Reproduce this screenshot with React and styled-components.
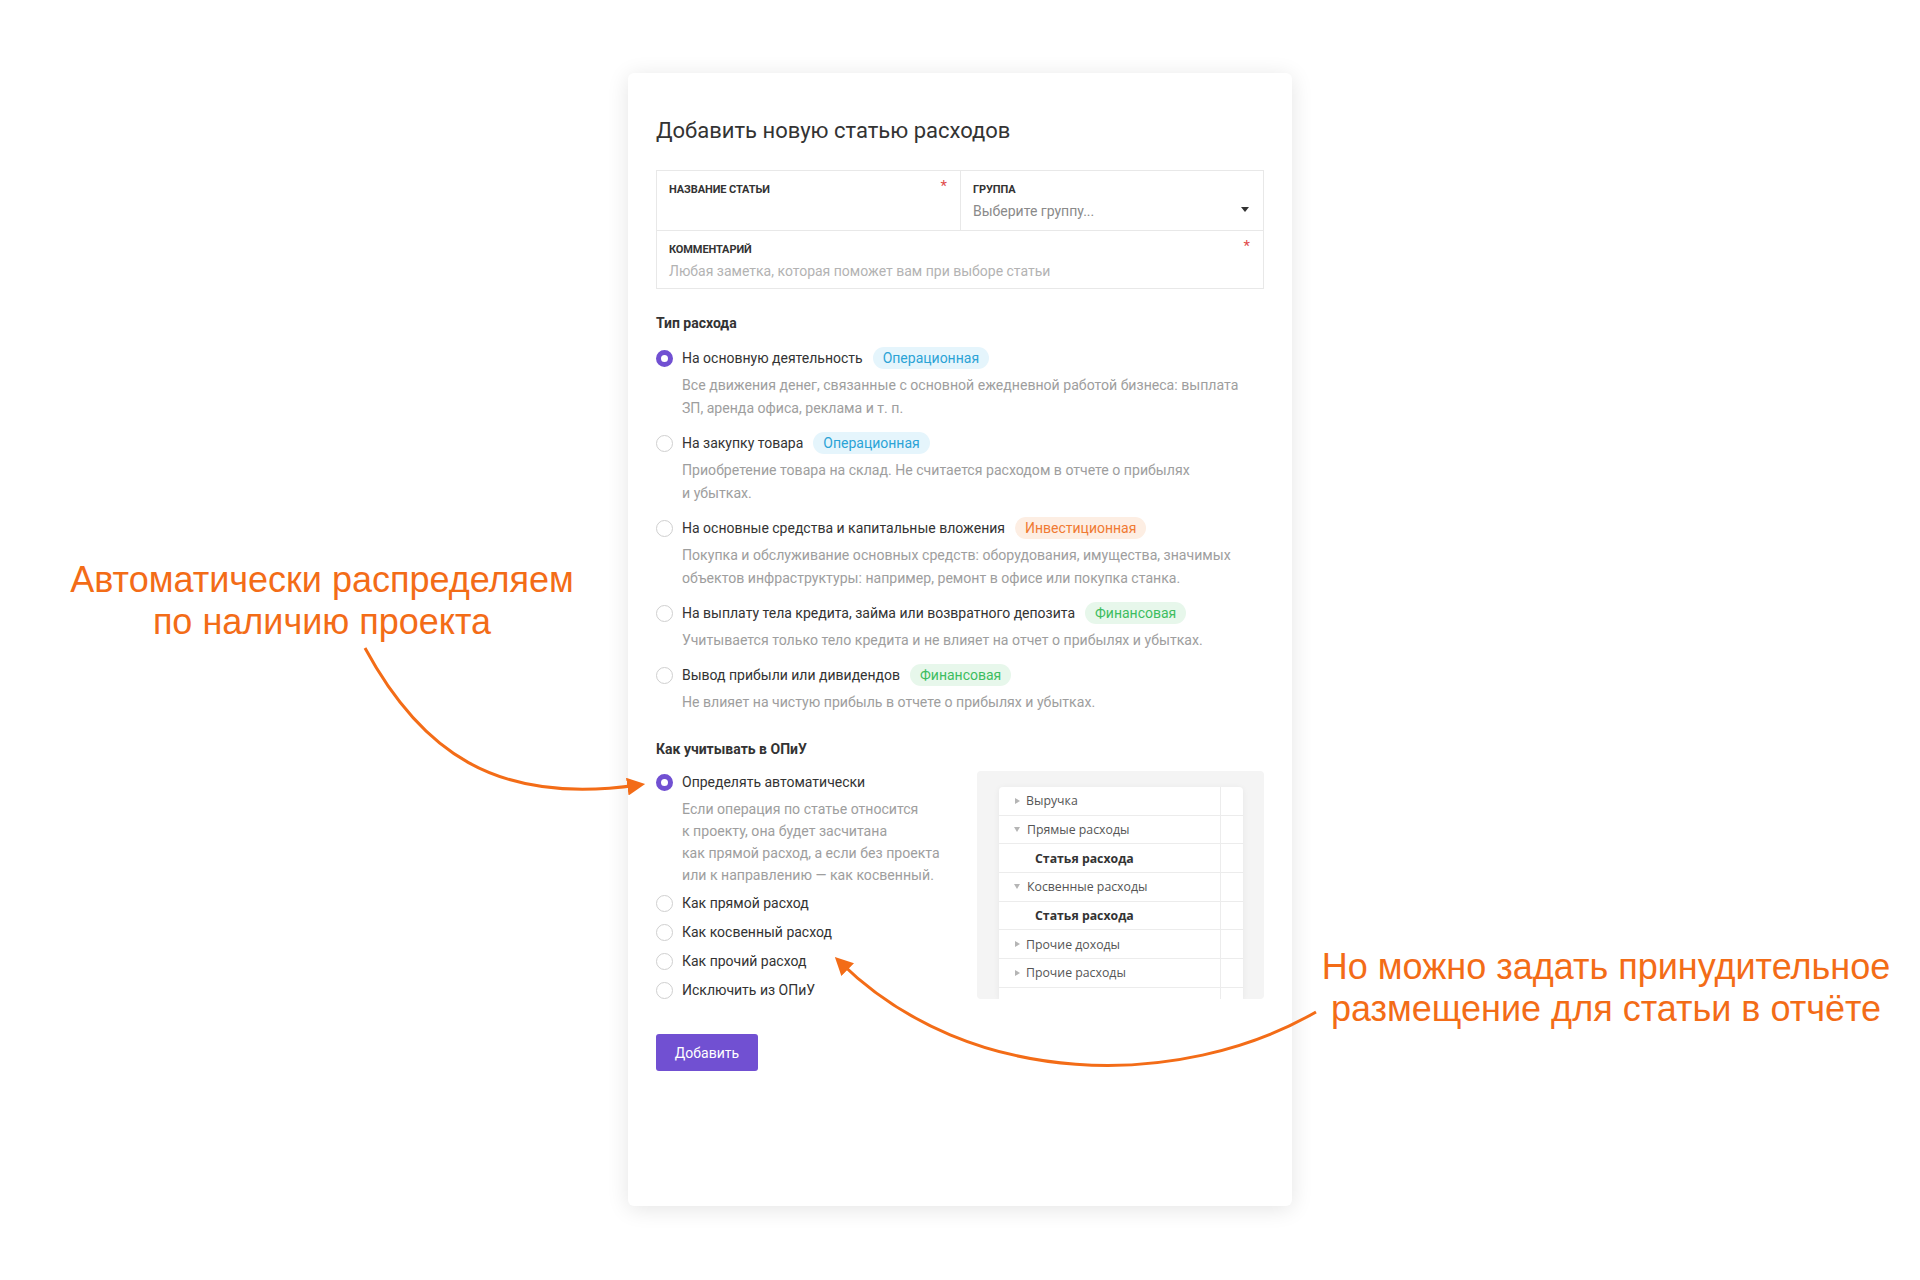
import React from "react";
import styled, { createGlobalStyle } from "styled-components";

const GlobalStyle = createGlobalStyle`
  body {
    margin: 0;
    background: #ffffff;
    font-family: Roboto, "Noto Sans", sans-serif;
    color: #333333;
  }
`;

const Page = styled.div`
  position: relative;
  width: 1920px;
  height: 1280px;
  display: grid;
  grid-template-columns: 628px 664px 1fr;
  overflow: hidden;
`;

const Note = styled.div`
  padding-top: ${p => p.top}px;
  padding-left: ${p => p.shift || 0}px;
  text-align: center;
  font-family: "Liberation Sans", Arial, sans-serif;
  font-size: 36px;
  line-height: 42px;
  color: #f36c17;
`;

const Card = styled.div`
  margin-top: 73px;
  height: 1133px;
  box-sizing: border-box;
  padding: 42px 28px 40px;
  background: #ffffff;
  border-radius: 6px;
  box-shadow: 0 3px 22px rgba(0, 0, 0, 0.11);
`;

const Title = styled.h1`
  margin: 0 0 23px;
  font-size: 22px;
  line-height: 32px;
  font-weight: 400;
  color: #333333;
`;

const Fields = styled.div`
  display: grid;
  grid-template-columns: 1fr 1fr;
  border: 1px solid #e8e8e8;
`;

const Field = styled.div`
  position: relative;
  grid-column: ${p => (p.wide ? "1 / 3" : "auto")};
  height: ${p => (p.wide ? 58 : 59)}px;
  box-sizing: border-box;
  padding: 12px 12px 0;
  border-left: ${p => (p.divider ? "1px solid #e8e8e8" : "none")};
  border-top: ${p => (p.wide ? "1px solid #e8e8e8" : "none")};
`;

const FieldLabel = styled.div`
  font-size: 11px;
  line-height: 14px;
  font-weight: 700;
  letter-spacing: -0.1px;
  text-transform: uppercase;
  color: #333333;
`;

const FieldValue = styled.div`
  margin-top: 4px;
  font-size: 14px;
  line-height: 20px;
  color: ${p => (p.light ? "#b3b3b3" : "#8a8a8a")};
`;

const Star = styled.span`
  position: absolute;
  top: 6px;
  right: 13px;
  font-size: 15px;
  color: #e14c4c;
`;

const Caret = styled.span`
  position: absolute;
  right: 14px;
  top: 36px;
  width: 0;
  height: 0;
  border-left: 4.5px solid transparent;
  border-right: 4.5px solid transparent;
  border-top: 5px solid #333333;
`;

const Heading = styled.h2`
  margin: ${p => p.top}px 0 ${p => p.bottom}px;
  font-size: 14px;
  line-height: 20px;
  font-weight: 700;
  color: #333333;
`;

const OptionList = styled.div`
  display: flex;
  flex-direction: column;
  gap: ${p => p.gap}px;
`;

const Option = styled.div`
  display: flex;
  flex-direction: column;
  margin-bottom: ${p => p.pull || 0}px;
`;

const OptionRow = styled.div`
  display: flex;
  align-items: center;
  height: 22px;
  font-size: 14px;
  color: #333333;
`;

const Radio = styled.span`
  width: 17px;
  height: 17px;
  box-sizing: border-box;
  border-radius: 50%;
  margin-right: 9px;
  flex-shrink: 0;
  background: #ffffff;
  border: ${p => (p.checked ? "5px solid #7150d2" : "1px solid #cfcfcf")};
`;

const Badge = styled.span`
  margin-left: 10px;
  height: 22px;
  padding: 0 10px;
  border-radius: 11px;
  font-size: 14px;
  line-height: 22px;
  color: ${p => p.fg};
  background: ${p => p.bg};
`;

const Desc = styled.div`
  margin-top: 5px;
  padding-left: 26px;
  font-size: 14.1px;
  line-height: ${p => p.lh || 23}px;
  color: #9e9e9e;
`;

const Split = styled.div`
  display: grid;
  grid-template-columns: 321px 287px;
`;

const Preview = styled.div`
  height: 228px;
  box-sizing: border-box;
  padding: 16px 21px 0 22px;
  background: #f4f4f4;
  border-radius: 4px;
  overflow: hidden;
`;

const Table = styled.div`
  background: #ffffff;
  border-radius: 4px 4px 0 0;
  box-shadow: 0 1px 6px rgba(0, 0, 0, 0.06);
  height: 100%;
`;

const TreeRow = styled.div`
  display: grid;
  grid-template-columns: 1fr 22px;
  height: 28.67px;
  box-sizing: border-box;
  border-bottom: 1px solid #ececec;
`;

const TreeCell = styled.div`
  display: flex;
  align-items: center;
  padding-left: ${p => (p.bold ? 36 : 15)}px;
  font-family: "Open Sans", sans-serif;
  font-size: 12.3px;
  font-weight: ${p => (p.bold ? 700 : 400)};
  color: ${p => (p.bold ? "#333333" : "#555555")};
  border-right: 1px solid #ececec;
`;

const Tri = styled.span`
  width: 0;
  height: 0;
  margin-right: 7px;
  ${p =>
    p.down
      ? `border-left: 3.5px solid transparent;
         border-right: 3.5px solid transparent;
         border-top: 5px solid #b5b5b5;`
      : `border-top: 3.5px solid transparent;
         border-bottom: 3.5px solid transparent;
         border-left: 5px solid #b5b5b5;
         margin-left: 1px;
         margin-right: 6px;`}
`;

const Button = styled.button`
  margin-top: 33px;
  width: 102px;
  height: 37px;
  border: none;
  border-radius: 3px;
  background: #7150d2;
  color: #ffffff;
  font-family: Roboto, sans-serif;
  font-size: 14px;
`;

const Overlay = styled.svg`
  position: absolute;
  left: 0;
  top: 0;
  pointer-events: none;
`;

const types = [
  {
    label: "На основную деятельность",
    badge: "Операционная",
    kind: "op",
    checked: true,
    desc: ["Все движения денег, связанные с основной ежедневной работой бизнеса: выплата", "ЗП, аренда офиса, реклама и т. п."],
  },
  {
    label: "На закупку товара",
    badge: "Операционная",
    kind: "op",
    desc: ["Приобретение товара на склад. Не считается расходом в отчете о прибылях", "и убытках."],
  },
  {
    label: "На основные средства и капитальные вложения",
    badge: "Инвестиционная",
    kind: "inv",
    desc: ["Покупка и обслуживание основных средств: оборудования, имущества, значимых", "объектов инфраструктуры: например, ремонт в офисе или покупка станка."],
  },
  {
    label: "На выплату тела кредита, займа или возвратного депозита",
    badge: "Финансовая",
    kind: "fin",
    desc: ["Учитывается только тело кредита и не влияет на отчет о прибылях и убытках."],
  },
  {
    label: "Вывод прибыли или дивидендов",
    badge: "Финансовая",
    kind: "fin",
    desc: ["Не влияет на чистую прибыль в отчете о прибылях и убытках."],
  },
];

const badgeColors = {
  op: { fg: "#2ba3d6", bg: "#e5f5fc" },
  inv: { fg: "#f07a32", bg: "#fdeee3" },
  fin: { fg: "#3dbd60", bg: "#e7f7eb" },
};

const tree = [
  { label: "Выручка", tri: "right" },
  { label: "Прямые расходы", tri: "down" },
  { label: "Статья расхода", bold: true },
  { label: "Косвенные расходы", tri: "down" },
  { label: "Статья расхода", bold: true },
  { label: "Прочие доходы", tri: "right" },
  { label: "Прочие расходы", tri: "right" },
  { label: "" },
];

const others = ["Как прямой расход", "Как косвенный расход", "Как прочий расход", "Исключить из ОПиУ"];

export default function App() {
  return (
    <>
      <GlobalStyle />
      <Page>
        <Note top={559} shift={16}>
          Автоматически распределяем
          <br />
          по наличию проекта
        </Note>

        <Card>
          <Title>Добавить новую статью расходов</Title>

          <Fields>
            <Field>
              <FieldLabel>Название статьи</FieldLabel>
              <Star>*</Star>
            </Field>
            <Field divider>
              <FieldLabel>Группа</FieldLabel>
              <FieldValue>Выберите группу...</FieldValue>
              <Caret />
            </Field>
            <Field wide>
              <FieldLabel>Комментарий</FieldLabel>
              <FieldValue light>Любая заметка, которая поможет вам при выборе статьи</FieldValue>
              <Star>*</Star>
            </Field>
          </Fields>

          <Heading top={24} bottom={14}>Тип расхода</Heading>
          <OptionList gap={12}>
            {types.map(t => (
              <Option key={t.label}>
                <OptionRow>
                  <Radio checked={t.checked} />
                  {t.label}
                  <Badge {...badgeColors[t.kind]}>{t.badge}</Badge>
                </OptionRow>
                <Desc>
                  {t.desc.map((line, i) => (
                    <div key={i}>{line}</div>
                  ))}
                </Desc>
              </Option>
            ))}
          </OptionList>

          <Heading top={25} bottom={12}>Как учитывать в ОПиУ</Heading>
          <Split>
            <OptionList gap={7}>
              <Option pull={-1}>
                <OptionRow>
                  <Radio checked />
                  Определять автоматически
                </OptionRow>
                <Desc lh={22}>
                  Если операция по статье относится
                  <br />к проекту, она будет засчитана
                  <br />
                  как прямой расход, а если без проекта
                  <br />
                  или к направлению — как косвенный.
                </Desc>
              </Option>
              {others.map(o => (
                <OptionRow key={o}>
                  <Radio />
                  {o}
                </OptionRow>
              ))}
            </OptionList>

            <Preview>
              <Table>
                {tree.map((r, i) => (
                  <TreeRow key={i}>
                    <TreeCell bold={r.bold}>
                      {r.tri && <Tri down={r.tri === "down"} />}
                      {r.label}
                    </TreeCell>
                    <div />
                  </TreeRow>
                ))}
              </Table>
            </Preview>
          </Split>

          <Button>Добавить</Button>
        </Card>

        <Note top={946}>
          Но можно задать принудительное
          <br />
          размещение для статьи в отчёте
        </Note>

        <Overlay width="1920" height="1280" viewBox="0 0 1920 1280">
          <defs>
            <marker id="head" viewBox="0 0 10 10" refX="6" refY="5" markerWidth="6" markerHeight="6" orient="auto">
              <path d="M0 0 L10 5 L0 10 z" fill="#f36c17" />
            </marker>
          </defs>
          <path
            d="M365 648 C 420 750, 495 806, 638 785"
            fill="none"
            stroke="#f36c17"
            strokeWidth="3"
            markerEnd="url(#head)"
          />
          <path
            d="M1316 1012 C 1180 1090, 970 1090, 840 962"
            fill="none"
            stroke="#f36c17"
            strokeWidth="3"
            markerEnd="url(#head)"
          />
        </Overlay>
      </Page>
    </>
  );
}
